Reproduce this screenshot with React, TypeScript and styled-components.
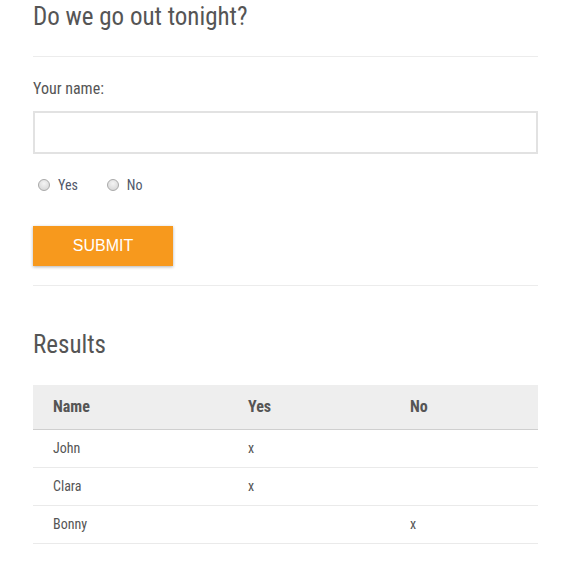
import React from "react";
import styled, { createGlobalStyle } from "styled-components";

const Global = createGlobalStyle`
  html, body { margin: 0; padding: 0; background: #fff; }
  body { font-family: "Roboto Condensed", Roboto, "Liberation Sans", sans-serif; color: #555; }
`;

const Page = styled.div`
  width: 505px;
  padding: 0 0 30px 33px;
`;

const Title = styled.h1`
  margin: 0;
  padding-top: 2px;
  height: 56px;
  box-sizing: border-box;
  font-size: 25px;
  font-weight: 400;
  line-height: 30px;
  color: #555;
`;

const Rule = styled.hr`
  margin: 0;
  border: 0;
  border-top: 1px solid #ececec;
`;

const Form = styled.form`
  display: flex;
  flex-direction: column;
  padding-top: 22px;
  padding-bottom: 19px;
`;

const Label = styled.label`
  font-size: 16px;
  line-height: 20px;
  color: #555;
  margin-bottom: 12px;
`;

const Input = styled.input`
  box-sizing: border-box;
  width: 505px;
  height: 43px;
  border: 2px solid #e2e2e2;
  outline: none;
  font: inherit;
  padding: 0 10px;
`;

const RadioRow = styled.div`
  display: flex;
  align-items: center;
  gap: 29px;
  margin-top: 22px;
  margin-left: 5px;
`;

const RadioLabel = styled.label`
  display: flex;
  align-items: center;
  gap: 8px;
  font-size: 14px;
  line-height: 18px;
  color: #50586a;
`;

const Radio = styled.input.attrs({ type: "radio" })`
  appearance: none;
  margin: 0;
  width: 12px;
  height: 12px;
  border-radius: 50%;
  border: 1px solid #a9a9a9;
  background: radial-gradient(circle at 50% 35%, #f4f4f4 0%, #dcdcdc 70%, #cfcfcf 100%);
  box-sizing: border-box;
`;

const Submit = styled.button`
  margin-top: 32px;
  width: 140px;
  height: 40px;
  border: 0;
  background: #f7991d;
  color: #fff;
  font-family: "Liberation Sans", Arial, sans-serif;
  font-size: 16px;
  box-shadow: 0 1px 3px rgba(0, 0, 0, 0.3);
  cursor: pointer;
`;

const ResultsTitle = styled.h2`
  margin: 0;
  padding-top: 44px;
  font-size: 25px;
  font-weight: 400;
  line-height: 30px;
  color: #555;
`;

const Table = styled.table`
  margin-top: 25px;
  width: 505px;
  border-collapse: collapse;
`;

const Th = styled.th<{ $w?: number }>`
  width: ${(p) => (p.$w ? `${p.$w}px` : "auto")};
  background: #eeeeee;
  height: 44px;
  padding: 0 20px;
  box-sizing: border-box;
  text-align: left;
  font-size: 16px;
  font-weight: 700;
  color: #555;
  border-bottom: 1px solid #cfcfcf;
`;

const Td = styled.td`
  height: 38px;
  padding: 0 20px;
  box-sizing: border-box;
  font-size: 14px;
  color: #555;
  border-bottom: 1px solid #eaeaea;
`;

const rows = [
  { name: "John", yes: true },
  { name: "Clara", yes: true },
  { name: "Bonny", yes: false },
];

export default function App() {
  return (
    <>
      <Global />
      <Page>
        <Title>Do we go out tonight?</Title>
        <Rule />
        <Form onSubmit={(e) => e.preventDefault()}>
          <Label htmlFor="name">Your name:</Label>
          <Input id="name" type="text" />
          <RadioRow>
            <RadioLabel>
              <Radio name="go" value="yes" />
              Yes
            </RadioLabel>
            <RadioLabel>
              <Radio name="go" value="no" />
              No
            </RadioLabel>
          </RadioRow>
          <div>
            <Submit type="submit">SUBMIT</Submit>
          </div>
        </Form>
        <Rule />
        <ResultsTitle>Results</ResultsTitle>
        <Table>
          <thead>
            <tr>
              <Th $w={195}>Name</Th>
              <Th $w={162}>Yes</Th>
              <Th>No</Th>
            </tr>
          </thead>
          <tbody>
            {rows.map((r) => (
              <tr key={r.name}>
                <Td>{r.name}</Td>
                <Td>{r.yes ? "x" : ""}</Td>
                <Td>{r.yes ? "" : "x"}</Td>
              </tr>
            ))}
          </tbody>
        </Table>
      </Page>
    </>
  );
}
